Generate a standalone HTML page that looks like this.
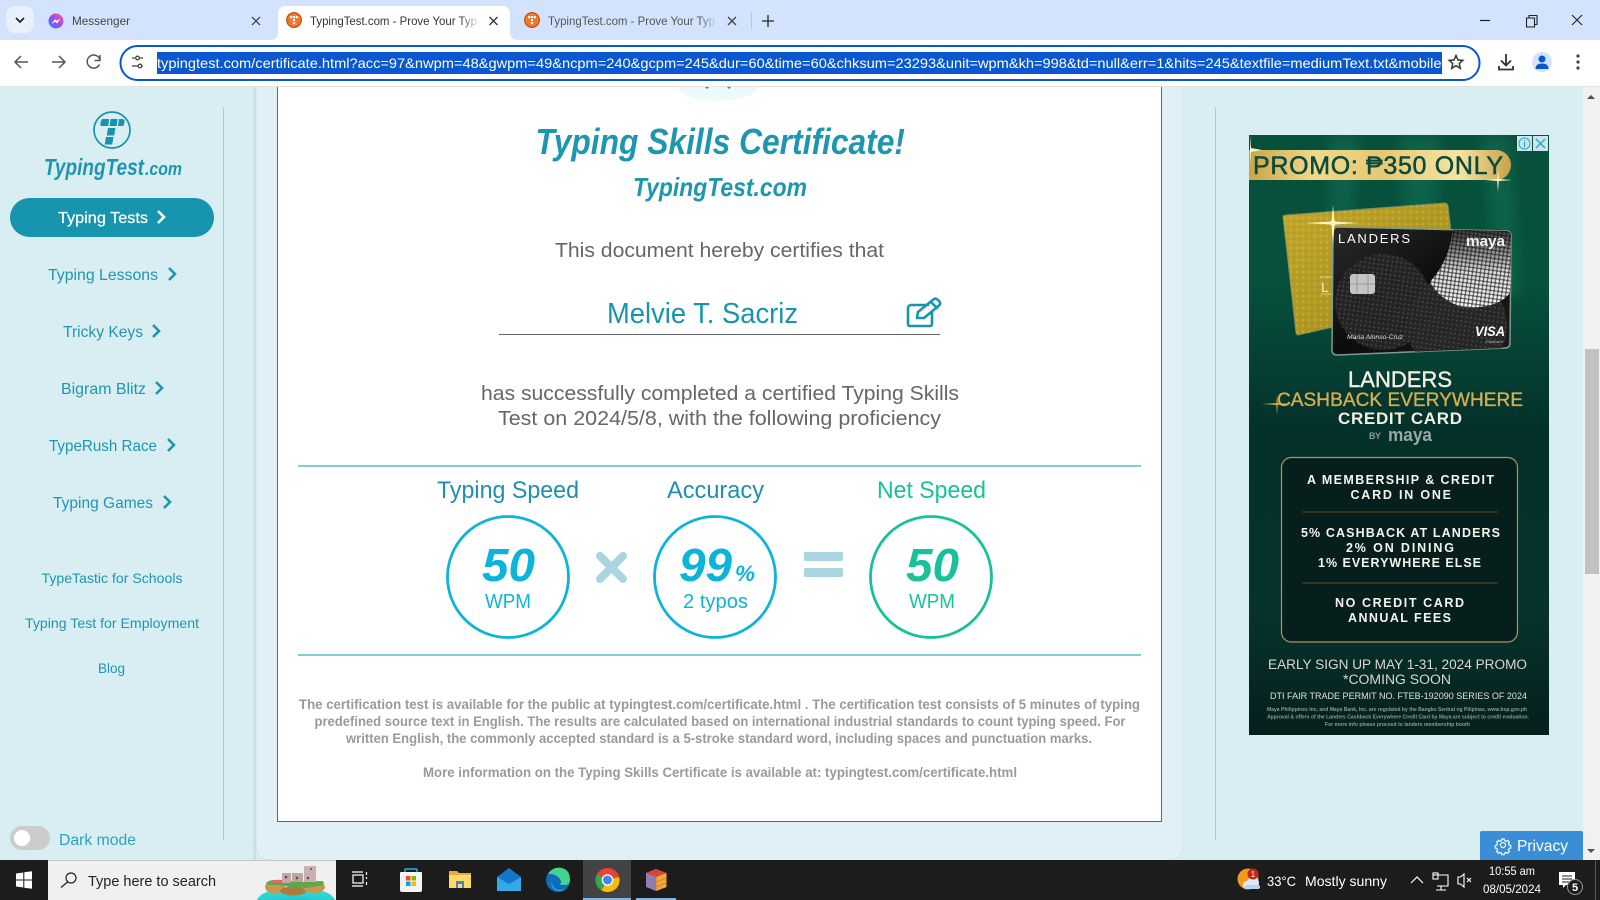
<!DOCTYPE html>
<html lang="en"><head><meta charset="utf-8"><title>TypingTest.com - Prove Your Typing Skills</title>
<style>
html,body{margin:0;padding:0;width:1600px;height:900px;overflow:hidden;background:#d9eef3}
svg{display:block;position:absolute;left:0;top:0}
text{font-family:"Liberation Sans",sans-serif}
.s{fill:#1f96af;font-size:16px}
.l{fill:#1f96af;font-size:14px}
.t{fill:#1f96af;font-weight:bold;font-style:italic}
.g{fill:#666;font-size:20px}
.p{fill:#9a9a9a;font-size:14px;font-weight:bold}
.w{fill:#fff}
.a{fill:#f4f4ee;font-weight:bold;font-size:12.5px}
.tb{fill:#444;font-size:12px}
</style></head><body>
<svg width="1600" height="900" viewBox="0 0 1600 900" xmlns="http://www.w3.org/2000/svg">
<defs>
<linearGradient id="fade" x1="0" x2="1"><stop offset="0" stop-color="#fff" stop-opacity="0"/><stop offset="1" stop-color="#fff"/></linearGradient>
<linearGradient id="fade2" x1="0" x2="1"><stop offset="0" stop-color="#d3e3fd" stop-opacity="0"/><stop offset="1" stop-color="#d3e3fd"/></linearGradient>
<linearGradient id="shadow" x1="0" x2="1"><stop offset="0" stop-color="#c4d8de" stop-opacity="0"/><stop offset="1" stop-color="#c4d8de"/></linearGradient>
<linearGradient id="msg" x1="0" y1="1" x2="1" y2="0"><stop offset="0" stop-color="#2f7bff"/><stop offset=".5" stop-color="#a14bf0"/><stop offset="1" stop-color="#ff5f7e"/></linearGradient>
<linearGradient id="adbg" x1="0" y1="0" x2="0" y2="1"><stop offset="0" stop-color="#07503c"/><stop offset=".25" stop-color="#06503c"/><stop offset=".5" stop-color="#04302a"/><stop offset=".8" stop-color="#06332c"/><stop offset="1" stop-color="#051f1c"/></linearGradient>
<linearGradient id="gold" x1="0" x2="1"><stop offset="0" stop-color="#c9a548"/><stop offset=".25" stop-color="#f0d98c"/><stop offset=".5" stop-color="#e6c870"/><stop offset=".8" stop-color="#f5e4a4"/><stop offset="1" stop-color="#c8a24a"/></linearGradient>
<linearGradient id="goldcard" x1="0" y1="0" x2="1" y2="1"><stop offset="0" stop-color="#c3a82c"/><stop offset="1" stop-color="#a08a1c"/></linearGradient>
<linearGradient id="card" x1="0" y1="0" x2="1" y2="1"><stop offset="0" stop-color="#2a2a2a"/><stop offset=".5" stop-color="#0c0c0c"/><stop offset="1" stop-color="#1c1c1c"/></linearGradient>
<linearGradient id="lensfade" x1="0" y1="0" x2="0" y2="1"><stop offset="0" stop-color="#0c0c0c" stop-opacity=".85"/><stop offset=".55" stop-color="#0c0c0c" stop-opacity=".1"/><stop offset="1" stop-color="#0c0c0c" stop-opacity="0"/></linearGradient>
<radialGradient id="sea" cx=".5" cy="1" r=".7"><stop offset="0" stop-color="#1fc4d8"/><stop offset="1" stop-color="#35d9cf"/></radialGradient>
<pattern id="dots" width="4" height="4" patternUnits="userSpaceOnUse" patternTransform="rotate(8)"><circle cx="2" cy="2" r="1.600" fill="#f2f2f2"/></pattern>
<pattern id="dots2" width="4.500" height="4.500" patternUnits="userSpaceOnUse" patternTransform="rotate(8)"><circle cx="2.200" cy="2.200" r=".9" fill="#4a4a4a"/></pattern>
<pattern id="glit" width="6" height="6" patternUnits="userSpaceOnUse"><circle cx="1" cy="2" r=".6" fill="#e6d668"/><circle cx="4" cy="5" r=".5" fill="#877415"/></pattern>
<filter id="bl" x="-30%" y="-30%" width="160%" height="160%"><feGaussianBlur stdDeviation="7"/></filter>
<clipPath id="adc"><rect x="1249" y="135" width="300" height="600"/></clipPath>
<clipPath id="cardc"><path d="M1338 227L1506 231Q1511 231 1511 236L1510 343Q1510 348 1505 348L1337 355Q1332 355 1332 350L1333 232Q1333 227 1338 227Z"/></clipPath>
<g id="fav"><circle r="8" fill="#f0772b"/><circle r="7.300" fill="none" stroke="#a84a14" stroke-width=".8"/><rect x="-4" y="-4" width="2.200" height="2.200" fill="#fff"/><rect x="-1.100" y="-4" width="2.200" height="2.200" fill="#fff"/><rect x="1.800" y="-4" width="2.200" height="2.200" fill="#fff"/><rect x="-1.100" y="-1" width="2.200" height="2.200" fill="#fff"/><rect x="-1.100" y="2" width="2.200" height="2.200" fill="#fff"/></g>
</defs>

<!-- page background -->
<rect width="1600" height="900" fill="#d9eef3"/>
<rect x="252" y="86" width="4" height="775" fill="url(#shadow)"/>
<path d="M256 86H1183V845Q1183 860 1168 860H271Q256 860 256 845Z" fill="#e0f0f6"/>
<path d="M1183 86V845Q1183 860 1168 860" fill="none" stroke="#d2e6ec" stroke-width="1"/>
<path d="M256 86V845Q256 860 271 860" fill="none" stroke="#cfe3e9" stroke-width="1"/>

<!-- sidebar -->
<rect x="223" y="107" width="1" height="733" fill="#a4d0da"/>
<rect x="1215" y="107" width="1" height="733" fill="#a4d0da"/>
<circle cx="112" cy="130" r="18" fill="none" stroke="#1795ae" stroke-width="1.700"/>
<g fill="#1795ae"><path d="M102 119h7.200l-1 7h-7.600q-.6-4 1.400-7Z"/><path d="M110.600 119h7l-1 7h-7Z"/><path d="M119 119h4q2 1 1.500 3l-1 4h-5.500Z"/><path d="M108 128h7.500l-1.300 7.500h-7.500Z"/><path d="M106 137h7.500l-1.300 7.500h-7.500Z"/></g>
<text class="t" x="44" y="175" font-size="23" textLength="100" lengthAdjust="spacingAndGlyphs">TypingTest</text>
<text class="t" x="145" y="175" font-size="18" textLength="37" lengthAdjust="spacingAndGlyphs">.com</text>
<rect x="10" y="198" width="204" height="39" rx="19.500" fill="#1795ae"/>
<text class="w" x="58" y="223" font-size="16" stroke="#fff" stroke-width=".2" textLength="90" lengthAdjust="spacingAndGlyphs">Typing Tests</text>
<path d="M158 211l6 6-6 6" fill="none" stroke="#fff" stroke-width="2.600"/>
<text class="s" x="48" y="280" textLength="110" lengthAdjust="spacingAndGlyphs">Typing Lessons</text>
<path d="M169 268l6 6-6 6" fill="none" stroke="#1f96af" stroke-width="2.600"/>
<text class="s" x="63" y="337" textLength="80" lengthAdjust="spacingAndGlyphs">Tricky Keys</text>
<path d="M153 325l6 6-6 6" fill="none" stroke="#1f96af" stroke-width="2.600"/>
<text class="s" x="61" y="394" textLength="85" lengthAdjust="spacingAndGlyphs">Bigram Blitz</text>
<path d="M156 382l6 6-6 6" fill="none" stroke="#1f96af" stroke-width="2.600"/>
<text class="s" x="49" y="451" textLength="108" lengthAdjust="spacingAndGlyphs">TypeRush Race</text>
<path d="M168 439l6 6-6 6" fill="none" stroke="#1f96af" stroke-width="2.600"/>
<text class="s" x="53" y="508" textLength="100" lengthAdjust="spacingAndGlyphs">Typing Games</text>
<path d="M164 496l6 6-6 6" fill="none" stroke="#1f96af" stroke-width="2.600"/>
<text class="l" x="41.500" y="583" textLength="141" lengthAdjust="spacingAndGlyphs">TypeTastic for Schools</text>
<text class="l" x="25" y="628" textLength="174" lengthAdjust="spacingAndGlyphs">Typing Test for Employment</text>
<text class="l" x="98" y="673" textLength="27" lengthAdjust="spacingAndGlyphs">Blog</text>
<rect x="10" y="826" width="40" height="24" rx="12" fill="#ccc"/>
<circle cx="22" cy="838" r="8" fill="#fff"/>
<text class="s" x="59" y="845" textLength="77" lengthAdjust="spacingAndGlyphs" style="fill:#2aa3bb">Dark mode</text>

<!-- certificate card -->
<rect x="277.500" y="80" width="884" height="741.500" fill="#fff" stroke="#666" stroke-width="1"/>
<path d="M678 87A40 14 0 0 0 758 87Z" fill="#eef9fc"/>
<circle cx="707" cy="87" r="1.600" fill="#1795ae"/><circle cx="729" cy="87" r="1.600" fill="#1795ae"/>
<text class="t" x="535.500" y="154" font-size="36" textLength="369.500" lengthAdjust="spacingAndGlyphs">Typing Skills Certificate!</text>
<text class="t" x="633" y="196" font-size="26" textLength="174" lengthAdjust="spacingAndGlyphs">TypingTest.com</text>
<text class="g" x="555" y="257" textLength="329" lengthAdjust="spacingAndGlyphs">This document hereby certifies that</text>
<text x="607" y="323" font-size="29" fill="#1795ae" textLength="191" lengthAdjust="spacingAndGlyphs">Melvie T. Sacriz</text>
<rect x="499" y="334" width="441" height="1" fill="#666"/>
<g fill="none" stroke="#1795ae" stroke-width="2.600" stroke-linejoin="round" stroke-linecap="round"><path d="M928 305H911a3 3 0 0 0-3 3v16a2 2 0 0 0 2 2h20a2 2 0 0 0 2-2V312"/><path d="M917 318l1-6 16-13q2-1 4 1l1.500 1.500q1.500 2-.5 4L924 318Z"/><path d="M931 302l6 6"/></g>
<text class="g" x="481" y="400" textLength="478" lengthAdjust="spacingAndGlyphs">has successfully completed a certified Typing Skills</text>
<text class="g" x="498" y="425" textLength="443" lengthAdjust="spacingAndGlyphs">Test on 2024/5/8, with the following proficiency</text>
<rect x="298" y="465" width="843" height="2" fill="#86ccd6"/>
<rect x="298" y="654" width="843" height="2" fill="#86ccd6"/>
<text x="437" y="498" font-size="24" fill="#1d8fb0" textLength="142" lengthAdjust="spacingAndGlyphs">Typing Speed</text>
<text x="667" y="498" font-size="24" fill="#1d8fb0" textLength="97" lengthAdjust="spacingAndGlyphs">Accuracy</text>
<text x="877" y="498" font-size="24" fill="#17c29b" textLength="109" lengthAdjust="spacingAndGlyphs">Net Speed</text>
<circle cx="508" cy="577" r="60.500" fill="none" stroke="#0cb4d9" stroke-width="2.800"/>
<circle cx="715" cy="577" r="60.500" fill="none" stroke="#0cb4d9" stroke-width="2.800"/>
<circle cx="931" cy="577" r="60.500" fill="none" stroke="#17c29b" stroke-width="2.800"/>
<text x="482" y="581" font-size="46" font-weight="bold" font-style="italic" fill="#0cb4d9" textLength="53" lengthAdjust="spacingAndGlyphs">50</text>
<text x="679" y="581" font-size="46" font-weight="bold" font-style="italic" fill="#0cb4d9" textLength="53" lengthAdjust="spacingAndGlyphs">99</text>
<text x="735" y="581" font-size="22" font-weight="bold" font-style="italic" fill="#0cb4d9" textLength="20" lengthAdjust="spacingAndGlyphs">%</text>
<text x="906" y="581" font-size="46" font-weight="bold" font-style="italic" fill="#17c29b" textLength="53" lengthAdjust="spacingAndGlyphs">50</text>
<text x="485" y="608" font-size="20" fill="#0cb4d9" textLength="46" lengthAdjust="spacingAndGlyphs">WPM</text>
<text x="683" y="608" font-size="20" fill="#0cb4d9" textLength="65" lengthAdjust="spacingAndGlyphs">2 typos</text>
<text x="909" y="608" font-size="20" fill="#17c29b" textLength="46" lengthAdjust="spacingAndGlyphs">WPM</text>
<path d="M600 556L623 579M623 556L600 579" stroke="#a8d5df" stroke-width="8" stroke-linecap="round"/>
<rect x="804" y="552" width="39" height="9" rx="2" fill="#a8d5df"/>
<rect x="804" y="568" width="39" height="9" rx="2" fill="#a8d5df"/>
<text class="p" x="299" y="709" textLength="841" lengthAdjust="spacingAndGlyphs">The certification test is available for the public at typingtest.com/certificate.html . The certification test consists of 5 minutes of typing</text>
<text class="p" x="314.500" y="726" textLength="811" lengthAdjust="spacingAndGlyphs">predefined source text in English. The results are calculated based on international industrial standards to count typing speed. For</text>
<text class="p" x="346" y="743" textLength="746" lengthAdjust="spacingAndGlyphs">written English, the commonly accepted standard is a 5-stroke standard word, including spaces and punctuation marks.</text>
<text class="p" x="423" y="777" textLength="594" lengthAdjust="spacingAndGlyphs">More information on the Typing Skills Certificate is available at: typingtest.com/certificate.html</text>

<!-- ad -->
<g clip-path="url(#adc)">
<rect x="1249" y="135" width="300" height="600" fill="url(#adbg)"/>
<g fill="#14795c" opacity=".45" filter="url(#bl)"><path d="M1330 135h30l-20 180h-10Z"/><path d="M1400 135h40l-10 200h-20Z"/><path d="M1480 135h30l10 160h-20Z"/></g>
<path d="M1249 150H1496a15 15 0 0 1 0 30H1249Z" fill="url(#gold)"/>
<text x="1253" y="174" font-size="25" fill="#0b4a3b" stroke="#0b4a3b" stroke-width=".5" textLength="250" lengthAdjust="spacing">PROMO: ₱350 ONLY</text>
<path d="M1283 217Q1283 215 1286 215L1445 203Q1447 203 1448 206L1452 240V300L1298 335Q1297 335 1296 333Z" fill="url(#goldcard)" stroke="#7d8a62" stroke-width="1"/>
<path d="M1283 217Q1283 215 1286 215L1445 203Q1447 203 1448 206L1452 240V300L1298 335Q1297 335 1296 333Z" fill="url(#glit)"/>
<text x="1321" y="292" font-size="14" fill="#f2eecb">L</text>
<path d="M1320 277h12M1321 294h12" stroke="#e8e0a0" stroke-width=".8"/>
<path d="M1338 227L1506 231Q1511 231 1511 236L1510 343Q1510 348 1505 348L1337 355Q1332 355 1332 350L1333 232Q1333 227 1338 227Z" fill="url(#card)" stroke="#7d9a8e" stroke-width="1.500"/>
<g clip-path="url(#cardc)">
<circle cx="1383" cy="302" r="48" fill="#242424"/>
<circle cx="1383" cy="302" r="48" fill="url(#dots2)"/>
<circle cx="1457" cy="325" r="50" fill="#262626"/>
<circle cx="1457" cy="325" r="50" fill="url(#dots2)"/>
<path d="M1453 228L1512 231V290Q1500 310 1462 307Q1440 300 1430 282Q1450 260 1453 228Z" fill="#555"/>
<path d="M1453 228L1512 231V290Q1500 310 1462 307Q1440 300 1430 282Q1450 260 1453 228Z" fill="url(#dots)"/>
<path d="M1453 228L1512 231V290Q1500 310 1462 307Q1440 300 1430 282Q1450 260 1453 228Z" fill="url(#lensfade)"/>
</g>
<text x="1338" y="243" font-size="13" fill="#fff" textLength="72" lengthAdjust="spacing">LANDERS</text>
<text x="1466" y="246" font-size="15" font-weight="bold" fill="#f2f2f2" textLength="39" lengthAdjust="spacingAndGlyphs">maya</text>
<rect x="1350" y="274" width="25" height="20" rx="3" fill="#c5c5c5"/>
<path d="M1357 274v20M1368 274v20M1350 284h25" stroke="#999" stroke-width="1"/>
<text x="1347" y="339" font-size="6" font-style="italic" fill="#ddd" textLength="56" lengthAdjust="spacingAndGlyphs">Maria Alonso-Cruz</text>
<text x="1475" y="336" font-size="14" font-weight="bold" font-style="italic" fill="#fff" textLength="30" lengthAdjust="spacingAndGlyphs">VISA</text>
<text x="1486" y="343" font-size="4" fill="#bbb" textLength="17" lengthAdjust="spacingAndGlyphs">Platinum</text>
<g fill="#fff4c0"><path d="M1333 205L1334.500 221.500 1358 223 1334.500 224.500 1333 245 1331.500 224.500 1305 223 1331.500 221.500Z"/><circle cx="1333" cy="223" r="3"/><path d="M1498 170L1498.800 179 1512 180 1498.800 181 1498 192 1497.200 181 1485 180 1497.200 179Z"/><path d="M1277 395L1277.700 403 1293 404 1277.700 405 1277 415 1276.300 405 1262 404 1276.300 403Z" fill="#c9a548"/><path d="M1250 135L1251 148 1262 150 1251 152 1250 165Z"/></g>
<text x="1348" y="387" font-size="22" fill="#f2efe2" stroke="#f2efe2" stroke-width=".4" textLength="104" lengthAdjust="spacing">LANDERS</text>
<text x="1277" y="406" font-size="19" fill="#d7ad4f" stroke="#d7ad4f" stroke-width=".35" textLength="246" lengthAdjust="spacing">CASHBACK EVERYWHERE</text>
<text x="1338" y="424" font-size="17" fill="#f2efe2" font-weight="bold" textLength="124" lengthAdjust="spacing">CREDIT CARD</text>
<text x="1369" y="439" font-size="9" font-weight="bold" fill="#8a9d96" textLength="12" lengthAdjust="spacing">BY</text>
<text x="1388" y="441" font-size="18" font-weight="bold" fill="#9aa8a3" textLength="44" lengthAdjust="spacingAndGlyphs">maya</text>
<rect x="1281.500" y="457.500" width="236" height="184.500" rx="10" fill="#071f1c" stroke="#ad9650" stroke-width="1.200"/>
<text class="a" x="1307" y="484" textLength="187" lengthAdjust="spacing">A MEMBERSHIP &amp; CREDIT</text>
<text class="a" x="1350.500" y="499" textLength="100.500" lengthAdjust="spacing">CARD IN ONE</text>
<rect x="1302" y="511" width="196" height="2" fill="#35341e"/>
<text class="a" x="1301" y="537" textLength="199" lengthAdjust="spacing">5% CASHBACK AT LANDERS</text>
<text class="a" x="1346" y="552" textLength="108" lengthAdjust="spacing">2% ON DINING</text>
<text class="a" x="1318" y="567" textLength="163" lengthAdjust="spacing">1% EVERYWHERE ELSE</text>
<rect x="1302" y="582" width="196" height="2" fill="#35341e"/>
<text class="a" x="1335" y="607" textLength="129" lengthAdjust="spacing">NO CREDIT CARD</text>
<text class="a" x="1348" y="622" textLength="103" lengthAdjust="spacing">ANNUAL FEES</text>
<text x="1268" y="669" font-size="13.500" fill="#d8d8d0" textLength="259" lengthAdjust="spacingAndGlyphs">EARLY SIGN UP MAY 1-31, 2024 PROMO</text>
<text x="1343" y="684" font-size="13.500" fill="#d8d8d0" textLength="108" lengthAdjust="spacingAndGlyphs">*COMING SOON</text>
<text x="1270" y="699" font-size="9" fill="#e0e0d8" textLength="257" lengthAdjust="spacingAndGlyphs">DTI FAIR TRADE PERMIT NO. FTEB-192090 SERIES OF 2024</text>
<text x="1267" y="711" font-size="5.500" font-weight="bold" fill="#8c9a94" textLength="260" lengthAdjust="spacingAndGlyphs">Maya Philippines Inc, and Maya Bank, Inc. are regulated by the Bangko Sentral ng Pilipinas. www.bsp.gov.ph</text>
<text x="1267" y="718.500" font-size="5.500" font-weight="bold" fill="#8c9a94" textLength="262" lengthAdjust="spacingAndGlyphs">Approval &amp; offers of the Landers Cashback Everywhere Credit Card by Maya are subject to credit evaluation.</text>
<text x="1325" y="726" font-size="5.500" font-weight="bold" fill="#8c9a94" textLength="145" lengthAdjust="spacingAndGlyphs">For more info please proceed to landers membership booth</text>
<rect x="1517" y="136" width="15" height="15" fill="#cfe4ea"/><rect x="1533" y="136" width="15" height="15" fill="#cfe4ea"/>
<circle cx="1524.500" cy="143.500" r="5.500" fill="none" stroke="#22a7d0" stroke-width="1"/><path d="M1524.500 142v5M1524.500 140v1" stroke="#22a7d0" stroke-width="1.200"/>
<path d="M1536 139l9 9M1545 139l-9 9" stroke="#22a7d0" stroke-width="1.400"/>
</g>

<!-- scrollbar -->
<rect x="1583" y="86" width="17" height="775" fill="#f1f1f1"/>
<rect x="1585" y="349" width="14" height="225" fill="#c1c1c1"/>
<path d="M1587 99l4-4 4 4Z" fill="#505050"/><path d="M1587 849h8l-4 4Z" fill="#505050"/>

<!-- privacy -->
<path d="M1480 833a2 2 0 0 1 2-2H1581a2 2 0 0 1 2 2V860H1480Z" fill="#3a8ed8"/>
<g transform="translate(1503 845) scale(.72)" fill="none" stroke="#e6f1fb" stroke-width="1.700"><circle r="3.500"/><path d="M-1.500-7.500h3l.6 2 1.900.8 1.900-1 2.100 2.100-1 1.900.8 1.900 2 .6v3l-2 .6-.8 1.900 1 1.900-2.100 2.100-1.900-1-1.900.8-.6 2h-3l-.6-2-1.900-.8-1.900 1-2.100-2.100 1-1.900-.8-1.900-2-.6v-3l2-.6.8-1.900-1-1.900 2.100-2.100 1.900 1 1.900-.8Z" transform="translate(0 0) scale(1.100)"/></g>
<text x="1517" y="851" font-size="16" fill="#fff" textLength="51" lengthAdjust="spacingAndGlyphs">Privacy</text>

<!-- browser chrome -->
<rect width="1600" height="40" fill="#d3e3fd"/>
<rect y="40" width="1600" height="46" fill="#fff"/>
<rect y="86" width="1600" height="1" fill="#e3e3e3"/>
<rect x="6" y="6" width="28" height="27" rx="9" fill="#e9f0fd"/>
<path d="M16 18l4 4 4-4" fill="none" stroke="#222" stroke-width="1.800"/>
<circle cx="56" cy="21" r="7.500" fill="url(#msg)"/><path d="M52 23.500l3-4 2 1.500 3-2-3 4-2-1.500Z" fill="#fff" stroke="#fff" stroke-width=".5"/>
<text class="tb" x="72" y="25" textLength="58" lengthAdjust="spacingAndGlyphs">Messenger</text>
<path d="M252 17l8 8M260 17l-8 8" stroke="#444" stroke-width="1.300"/>
<path d="M270 40q8 0 8-8V14q0-8 8-8H502q8 0 8 8V32q0 8 8 8Z" fill="#fff"/>
<use href="#fav" x="294" y="20"/>
<text class="tb" x="310" y="25" textLength="167" lengthAdjust="spacingAndGlyphs" style="fill:#333">TypingTest.com - Prove Your Typ</text>
<rect x="460" y="10" width="20" height="22" fill="url(#fade)"/>
<path d="M489.500 17l8 8M497.500 17l-8 8" stroke="#333" stroke-width="1.300"/>
<use href="#fav" x="532" y="20"/>
<text class="tb" x="548" y="25" textLength="167" lengthAdjust="spacingAndGlyphs" style="fill:#555">TypingTest.com - Prove Your Typ</text>
<rect x="698" y="10" width="20" height="22" fill="url(#fade2)"/>
<path d="M728 17l8 8M736 17l-8 8" stroke="#444" stroke-width="1.300"/>
<rect x="751" y="12" width="1" height="17" fill="#a8c7fa"/>
<path d="M768 15v12M762 21h12" stroke="#444" stroke-width="1.600"/>
<path d="M1480 20.500h10" stroke="#222" stroke-width="1.200"/>
<path d="M1526.500 18h8v9h-8ZM1529 18v-2.500h8v9h-2.500" fill="none" stroke="#222" stroke-width="1.100"/>
<path d="M1572 15l10 10M1582 15l-10 10" stroke="#222" stroke-width="1.100"/>
<path d="M28 62H15M21 56l-6 6 6 6" fill="none" stroke="#555" stroke-width="1.500"/>
<path d="M52 62H65M59 56l6 6-6 6" fill="none" stroke="#555" stroke-width="1.500"/>
<path d="M100 60a6.500 6.500 0 1 0-.5 4.500M100 55v5.500h-5.500" fill="none" stroke="#555" stroke-width="1.500"/>
<rect x="120.500" y="46" width="1359" height="34" rx="17" fill="#fff" stroke="#0b57d0" stroke-width="2"/>
<g fill="none" stroke="#444" stroke-width="1.300"><path d="M132 58h3M140 58h3"/><circle cx="137.500" cy="58" r="1.800"/><path d="M132 66h6M142.500 66h.5"/><circle cx="140" cy="66" r="1.800"/></g>
<rect x="157" y="52" width="1285" height="22" fill="#0b57d0"/>
<svg x="157" y="52" width="1285" height="22" viewBox="157 52 1285 22"><text x="157" y="68" font-size="14" fill="#fff" textLength="1293" lengthAdjust="spacingAndGlyphs">typingtest.com/certificate.html?acc=97&amp;nwpm=48&amp;gwpm=49&amp;ncpm=240&amp;gcpm=245&amp;dur=60&amp;time=60&amp;chksum=23293&amp;unit=wpm&amp;kh=998&amp;td=null&amp;err=1&amp;hits=245&amp;textfile=mediumText.txt&amp;mobile=</text></svg>
<path d="M1456 55.500l2 4.500 4.800.4-3.600 3.100 1.100 4.800-4.300-2.600-4.300 2.600 1.100-4.800-3.600-3.100 4.800-.4Z" fill="none" stroke="#333" stroke-width="1.500"/>
<path d="M1506 54v11M1501 60.500l5 5 5-5M1499 66v3.500h14V66" fill="none" stroke="#333" stroke-width="1.800"/>
<circle cx="1542" cy="62" r="10" fill="#d3e3fd"/><circle cx="1542" cy="59" r="3.500" fill="#0b57d0"/><path d="M1535.500 69q0-5.500 6.500-5.500t6.500 5.500Z" fill="#0b57d0"/>
<g fill="#444"><circle cx="1578" cy="56" r="1.600"/><circle cx="1578" cy="62" r="1.600"/><circle cx="1578" cy="68" r="1.600"/></g>

<!-- taskbar -->
<rect y="860" width="1600" height="40" fill="#1c1c1c"/>
<g fill="#fff"><path d="M16 873.500l7.300-1v7H16Z"/><path d="M24.300 872.300L32 871.200V879.500H24.300Z"/><path d="M16 880.500H23.300V887.500L16 886.500Z"/><path d="M24.300 880.500H32V888.800L24.300 887.700Z"/></g>
<rect x="48" y="860" width="288" height="40" fill="#f0f0f0"/>
<rect x="48" y="860" width="288" height="1" fill="#c8c8c8"/>
<g fill="none" stroke="#222" stroke-width="1.200"><circle cx="71" cy="878" r="5"/><path d="M67.500 882l-6.500 5.500"/></g>
<text x="88" y="886" font-size="15" fill="#222" textLength="128" lengthAdjust="spacingAndGlyphs">Type here to search</text>
<path d="M257 900Q262 888 296 888T335 900Z" fill="url(#sea)"/>
<ellipse cx="275" cy="887" rx="10" ry="6.500" fill="#c9974f"/><ellipse cx="293" cy="891" rx="13" ry="4.500" fill="#a87c3e"/><ellipse cx="314" cy="887" rx="11" ry="6" fill="#c9974f"/>
<path d="M266 883Q270 879 282 880L300 882 322 881Q325 882 323 885L306 888 290 887 278 885 268 885Z" fill="#5fa84a"/>
<rect x="272" y="880" width="9" height="3" fill="#d07060"/>
<rect x="282" y="873" width="9" height="10" fill="#c2a9a4"/><rect x="292" y="873" width="11" height="9" fill="#bda5a0"/><rect x="304" y="866" width="12" height="16" fill="#c9b2ab"/>
<circle cx="286" cy="877" r="1.300" fill="#6a3a8a"/><circle cx="297" cy="878" r="1.300" fill="#6a3a8a"/><circle cx="308" cy="878" r="1.300" fill="#6a3a8a"/><circle cx="311" cy="869" r="1" fill="#6a3a8a"/>
<g fill="none" stroke="#fff" stroke-width="1.200"><rect x="353" y="875" width="10" height="8"/><path d="M352 872h11M352 886h11M366.500 872v3M366.500 877v2M366.500 882v3"/></g>
<path d="M401 872h20a1 1 0 0 1 1 1v17a2 2 0 0 1-2 2h-18a2 2 0 0 1-2-2v-17a1 1 0 0 1 1-1Z" fill="#f4f4f4"/>
<path d="M405 872v-2q0-1 1-1h10q1 0 1 1v2" fill="none" stroke="#25b4ea" stroke-width="1.500"/>
<rect x="406" y="876" width="4.500" height="4.500" fill="#f25022"/><rect x="411.500" y="876" width="4.500" height="4.500" fill="#7fba00"/><rect x="406" y="881.500" width="4.500" height="4.500" fill="#00a4ef"/><rect x="411.500" y="881.500" width="4.500" height="4.500" fill="#ffb900"/>
<path d="M449 871h8l2 2h12v15h-22Z" fill="#e5ad35"/><path d="M449 875h22v13h-22Z" fill="#ffd968"/><rect x="456" y="881" width="8" height="7" fill="#3a87c9"/><rect x="458" y="884" width="4" height="4" fill="#ffd968"/>
<path d="M497 877l12-9 12 9v14h-24Z" fill="#1277c9"/><path d="M497 877l12 7 12-7v14h-24Z" fill="#35a9e8"/>
<circle cx="558" cy="880" r="12" fill="#0f6cbd"/><path d="M548 874q5-8 14-6 8 2 8 12 0 5-5 5h-5q2-3 0-6-5-6-12-5Z" fill="#41d68c"/><path d="M552 881q0 8 8 9 4 0 8-2-7 5-13 2-5-3-3-9Z" fill="#2aa3e0"/>
<rect x="583" y="860" width="48" height="40" fill="#434343"/>
<rect x="583" y="898" width="48" height="2" fill="#7fb6e6"/>
<rect x="636" y="898" width="40" height="2" fill="#7fb6e6"/>
<circle cx="607.500" cy="880" r="12" fill="#ea4335"/><path d="M607.500 880L597.100 874A12 12 0 0 0 601.500 890.400Z" fill="#34a853"/><path d="M607.500 880L601.500 890.400A12 12 0 0 0 619.200 877Z" fill="#fbbc05"/><circle cx="607.500" cy="880" r="5.800" fill="#fff"/><circle cx="607.500" cy="880" r="4.500" fill="#4285f4"/>
<path d="M646 873l10-4 10.500 4v14l-10.500 4-10-4Z" fill="#8a7fc5"/><path d="M656 877l10.500-4v14l-10.500 4Z" fill="#f0a83c"/><path d="M646 873l10-4 10.500 4-10.500 4Z" fill="#d8432a"/>
<path d="M651 871v2l5 2v16M661 871v2l-5 2M646 878l10 4 10.500-4M646 883l10 4 10.500-4" fill="none" stroke="#c96a2a" stroke-width=".6"/>
<circle cx="1248" cy="879" r="10.500" fill="#f39a1c"/><circle cx="1253" cy="883" r="6" fill="#dfe9f7"/><circle cx="1247" cy="885" r="4" fill="#dfe9f7"/><rect x="1245" y="885" width="15" height="4" rx="2" fill="#bcd3f0"/>
<circle cx="1253" cy="874" r="5.500" fill="#c4281c"/><text x="1253" y="877" font-size="8" fill="#fff" text-anchor="middle">1</text>
<text x="1267" y="886" font-size="14" fill="#fff" textLength="29" lengthAdjust="spacingAndGlyphs">33°C</text>
<text x="1305" y="886" font-size="14" fill="#fff" textLength="82" lengthAdjust="spacingAndGlyphs">Mostly sunny</text>
<path d="M1411 883l6-6 6 6" fill="none" stroke="#fff" stroke-width="1.200"/>
<g fill="none" stroke="#fff" stroke-width="1.100"><path d="M1433 875h15v11h-11M1441 886v4M1436 890h10"/><rect x="1433" y="873" width="5" height="6"/></g>
<path d="M1458 877h2.500l3.500-3v13l-3.500-3H1458ZM1467 878l4 4M1471 878l-4 4" fill="none" stroke="#fff" stroke-width="1.100"/>
<text x="1489" y="875" font-size="12" fill="#fff" textLength="46" lengthAdjust="spacingAndGlyphs">10:55 am</text>
<text x="1483" y="893" font-size="12" fill="#fff" textLength="58" lengthAdjust="spacingAndGlyphs">08/05/2024</text>
<path d="M1559 872h16v13h-9l-3 3v-3h-4Z" fill="#fff"/><path d="M1562 876h10M1562 879h10M1562 882h10" stroke="#1c1c1c" stroke-width="1"/>
<circle cx="1575" cy="887" r="7.500" fill="#1c1c1c" stroke="#999" stroke-width="1"/>
<text x="1575" y="891" font-size="11" font-weight="bold" fill="#fff" text-anchor="middle">5</text>
<rect x="1595" y="860" width="1" height="40" fill="#555"/>
</svg>
</body></html>
